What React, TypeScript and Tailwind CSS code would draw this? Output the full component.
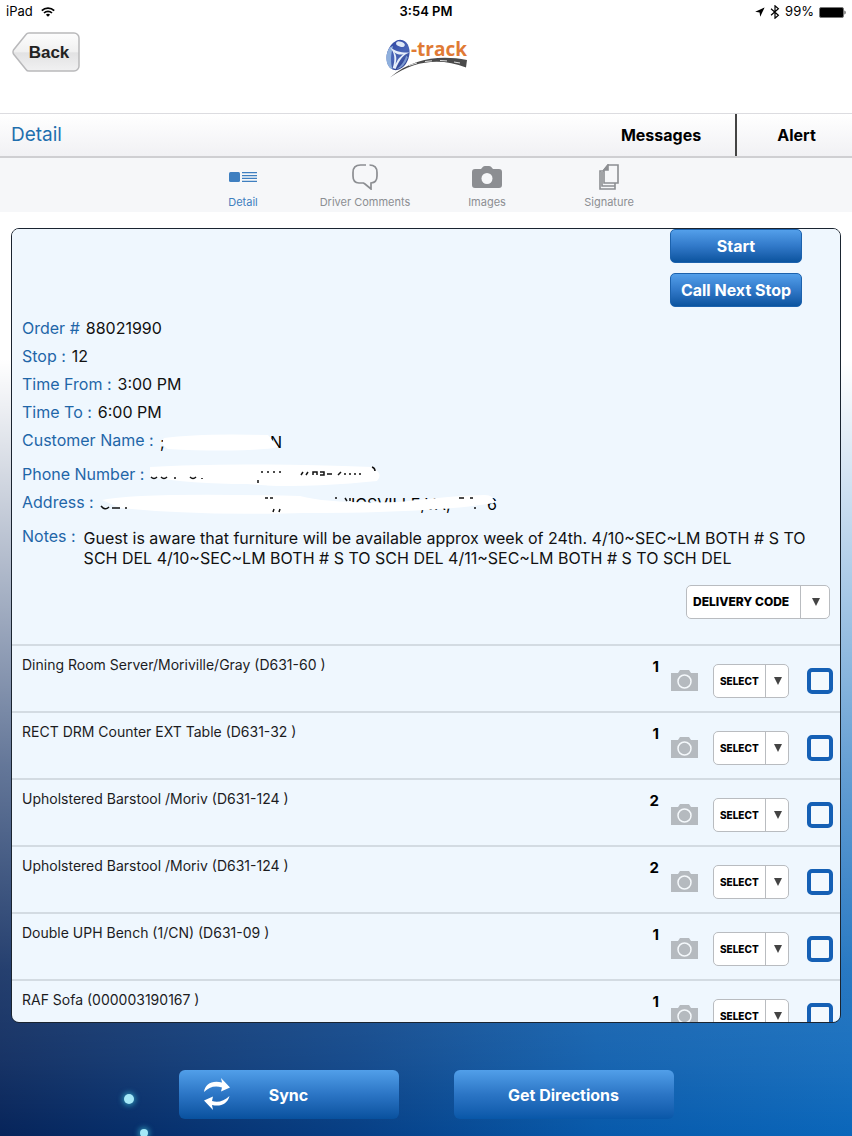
import type { ReactNode } from 'react';

const items = [
  { name: 'Dining Room Server/Moriville/Gray (D631-60 )', qty: 1 },
  { name: 'RECT DRM Counter EXT Table (D631-32 )', qty: 1 },
  { name: 'Upholstered Barstool /Moriv (D631-124 )', qty: 2 },
  { name: 'Upholstered Barstool /Moriv (D631-124 )', qty: 2 },
  { name: 'Double UPH Bench (1/CN) (D631-09 )', qty: 1 },
  { name: 'RAF Sofa (000003190167 )', qty: 1 },
];

function StatusBar() {
  return (
    <div className="grid h-6 shrink-0 grid-cols-3 items-center px-[6px] text-[13px] text-black">
      <div className="flex items-center gap-2">
        <span>iPad</span>
        <svg width="14" height="10" viewBox="0 0 14 10" fill="none" stroke="#000" strokeWidth="1.7">
          <path d="M0.8 3.6a8.8 8.8 0 0 1 12.4 0" />
          <path d="M3 6a5.7 5.7 0 0 1 8 0" />
          <path d="M7 9.8 4.9 7.7a3 3 0 0 1 4.2 0Z" fill="#000" stroke="none" />
        </svg>
      </div>
      <span className="text-center font-semibold">3:54 PM</span>
      <div className="flex items-center justify-end gap-[5px]">
        <svg width="10" height="10" viewBox="0 0 10 10">
          <path d="M9.6 0.4 0.2 4.8l4.4.6.6 4.4Z" />
        </svg>
        <svg width="10" height="14" viewBox="0 0 10 14" fill="none" stroke="#000" strokeWidth="1.2">
          <path d="m1 3.8 7.4 6.4L5 13.2V0.8l3.4 3L1 10.2" />
        </svg>
        <span>99%</span>
        <svg width="27" height="11" viewBox="0 0 27 11">
          <rect x="0.5" y="0.5" width="24" height="10" rx="1.5" fill="#000" stroke="#777" />
          <path d="M25.5 3.5c1.4.4 1.4 3.6 0 4Z" fill="#333" />
        </svg>
      </div>
    </div>
  );
}

function Logo() {
  return (
    <svg className="overflow-visible" width="84" height="42" viewBox="0 0 84 42" role="img" aria-label="i-track">
      <defs>
        <linearGradient id="oval" x1="0" y1="0" x2="1" y2="1">
          <stop offset="0" stopColor="#2b3f9e" />
          <stop offset="0.5" stopColor="#4a66b8" />
          <stop offset="1" stopColor="#23327f" />
        </linearGradient>
      </defs>
      <g transform="rotate(18 13 17)">
        <ellipse cx="13" cy="17" rx="11" ry="15.5" fill="url(#oval)" />
        <path d="M2 17c0 8 4 15 10.500 15.500C8 27 6 19 5.500 10Q2 12 2 17Z" fill="#8fb0dd" />
        <path d="M21 15c0 7-2 12-5 16q7-4 7-15Z" fill="#7a98d0" />
        <ellipse cx="12" cy="6" rx="4.500" ry="2.500" fill="#dfe8f7" />
        <path d="M3 12c6 2 14 2 20-1-5 4-7 9-8 20h-3c0-10-3-15-9-19Z" fill="#e6eefa" />
        <path d="M8.500 15.500c3 1 6.500 1 9.500-1-3 4-4 7-4.500 12C13 21 12 18 8.500 15.500Z" fill="#4560b0" />
      </g>
      <text x="26" y="18" fill="#e07a35" fontSize="19" fontWeight="700" fontFamily="Open Sans, sans-serif">
        -track
      </text>
      <path d="M5 39.500C28 20 55 17 82 22l-1 7.500C56 20 30 22 5 39.500Z" fill="#4a4a4a" />
      <path d="M24 27.500 32 25M40 23.500l7-.7M55 22.500l7 .4M69 24l6 1" stroke="#ddd" strokeWidth="1" />
    </svg>
  );
}

function BackButton() {
  return (
    <button
      type="button"
      className="relative flex h-10 w-[68px] items-center justify-center pt-px pl-[6px] font-['Liberation_Sans',sans-serif] text-[17px] font-bold text-[#222]"
    >
      <svg className="absolute inset-0" width="68" height="40" viewBox="0 0 68 40" aria-hidden="true">
        <defs>
          <linearGradient id="back" x1="0" y1="0" x2="0" y2="1">
            <stop offset="0" stopColor="#fdfdfd" />
            <stop offset="0.5" stopColor="#f0f0f0" />
            <stop offset="0.52" stopColor="#e2e2e3" />
            <stop offset="1" stopColor="#f1f1f2" />
          </linearGradient>
        </defs>
        <path
          d="M17 1h45a5 5 0 0 1 5 5v28a5 5 0 0 1-5 5H17q-2 0-3-1.500L1.500 22q-1-2 0-4L14 2.500Q15 1 17 1Z"
          fill="url(#back)"
          stroke="#b9b9bb"
          strokeWidth="1.500"
        />
      </svg>
      <span className="relative">Back</span>
    </button>
  );
}

function Tab({ label, active, children }: { label: string; active?: boolean; children: ReactNode }) {
  return (
    <button
      type="button"
      className={`flex w-[122px] flex-col items-center gap-[3px] text-[11px] leading-4 ${
        active ? 'text-[#3f7fc0]' : 'text-[#8c8e92]'
      }`}
    >
      <span className="flex h-7 items-center">{children}</span>
      {label}
    </button>
  );
}

function Tabs() {
  return (
    <nav className="flex h-[54px] shrink-0 justify-center bg-[#f6f7f9] pt-[5px]">
      <Tab label="Detail" active>
        <svg width="28" height="10" viewBox="0 0 28 10" fill="#3f7fc0">
          <rect width="11" height="10" rx="1.500" />
          <path d="M13 0h15v1.300H13zM13 2.900h15v1.300H13zM13 5.800h15v1.300H13zM13 8.700h15V10H13z" />
        </svg>
      </Tab>
      <Tab label="Driver Comments">
        <svg width="26" height="26" viewBox="0 0 26 26" fill="none" stroke="#8c8e92" strokeWidth="1.700">
          <path d="M14 1H8.500Q1 1 1 8.500V12q0 7 6 7h4.500l1.500 1 6 5v-6q6-.5 6-7V8.500Q25 1 17.500 1" />
        </svg>
      </Tab>
      <Tab label="Images">
        <svg width="30" height="22" viewBox="0 0 30 22">
          <path
            d="M3 3h6l2-2.200Q11.700 0 13 0h4q1.300 0 2 .8L21 3h6q3 0 3 3v13q0 3-3 3H3q-3 0-3-3V6q0-3 3-3Z"
            fill="#8c8e92"
          />
          <circle cx="15" cy="12.500" r="5.500" fill="#f6f7f9" />
        </svg>
      </Tab>
      <Tab label="Signature">
        <svg width="20" height="26" viewBox="0 0 20 26" fill="none" stroke="#8c8e92" strokeWidth="1.600">
          <path d="M9 1h10v18H5V6Z" />
          <path d="M9 1v5H5Z" fill="#8c8e92" />
          <path d="M5 7H1v18h15v-6M3 8v14h13" />
        </svg>
      </Tab>
    </nav>
  );
}

function Field({ label, children }: { label: string; children?: ReactNode }) {
  return (
    <div className="flex gap-[6px]">
      <dt className="text-[#1f66a8]">{label}</dt>
      <dd>{children}</dd>
    </div>
  );
}

function CodeSelect({ label, text, large }: { label: string; text: string; large?: boolean }) {
  return (
    <div className={`relative h-[34px] ${large ? 'w-36' : 'w-[76px]'}`}>
      <select
        aria-label={label}
        className={`h-full w-full appearance-none rounded-[5px] border border-[#b9bcc0] bg-white pl-[6px] font-extrabold text-black ${
          large ? 'text-[12px]' : 'text-[10px]'
        }`}
      >
        <option>{text}</option>
      </select>
      <span
        className={`pointer-events-none absolute inset-y-0 right-0 flex items-center justify-center border-l border-[#b9bcc0] ${
          large ? 'w-[30px]' : 'w-6'
        }`}
      >
        <svg width="8" height="8" viewBox="0 0 8 8" fill="#444">
          <path d="M0 0h8L4 8Z" />
        </svg>
      </span>
    </div>
  );
}

function PhotoIcon() {
  return (
    <svg width="27" height="21" viewBox="0 0 27 21">
      <path d="M0 3h7l2-3h9l2 3h7v18H0Z" fill="#b5babf" />
      <circle cx="13.500" cy="11.500" r="6.500" fill="none" stroke="#f4f8fb" strokeWidth="1.500" />
    </svg>
  );
}

function ItemTable() {
  return (
    <table className="w-full border-collapse">
      <tbody>
        {items.map((item, i) => (
          <tr key={i} className="h-[67px] border-t-2 border-[#d3dbe2] align-top">
            <td className="pt-[9px] pl-[10px] text-[14px] leading-5 text-[#1c1c1e]">{item.name}</td>
            <td className="w-10 pt-[11px] pr-3 text-right text-[15px] leading-5 font-bold">{item.qty}</td>
            <td className="w-[42px] pt-6">
              <button type="button" aria-label={`Photo of ${item.name}`} className="block">
                <PhotoIcon />
              </button>
            </td>
            <td className="w-[94px] pt-[18px]">
              <CodeSelect label={`Code for ${item.name}`} text="SELECT" />
            </td>
            <td className="w-[33px] pt-[22px]">
              <input
                type="checkbox"
                aria-label={`Check ${item.name}`}
                className="block size-[26px] appearance-none rounded-[5px] border-4 border-[#1560b5] bg-[#f3f9fe]"
              />
            </td>
          </tr>
        ))}
      </tbody>
    </table>
  );
}

function ActionButton({ children }: { children: ReactNode }) {
  return (
    <button
      type="button"
      className="h-[34px] w-[132px] rounded-[5px] border border-[#1c62ad] bg-linear-to-b from-[#539fea] via-[#3179c9] to-[#0a549f] text-[16px] font-bold text-white"
    >
      {children}
    </button>
  );
}

function OrderCard() {
  return (
    <section className="min-h-0 flex-1 overflow-x-hidden overflow-y-auto rounded-lg border border-[#1a2430] bg-[#eff7fe] [scrollbar-width:none]">
      <div className="flex flex-col items-end gap-[10px] pr-[38px]">
        <ActionButton>Start</ActionButton>
        <ActionButton>Call Next Stop</ActionButton>
      </div>

      <dl className="mt-[7px] pl-[10px] text-[16px] leading-7 text-[#111]">
        <Field label="Order #">88021990</Field>
        <Field label="Stop :">12</Field>
        <Field label="Time From :">3:00 PM</Field>
        <Field label="Time To :">6:00 PM</Field>
        <Field label="Customer Name :">
          <svg width="124" height="28" viewBox="0 0 124 28" className="block">
            <text x="0" y="22" fontSize="16">;</text>
            <text x="110" y="22" fontSize="16">N</text>
            <path d="M4 12Q40 7 108 9l10 12q-6 2-14 2-40 3-96 0-8-5-4-11Z" fill="#fff" />
          </svg>
        </Field>
        <div className="h-[6px]" />
        <Field label="Phone Number :">
          <svg width="240" height="28" viewBox="0 0 240 28" className="block">
            <path d="M0 7Q80 2 222 7q12 7 5 14-80 8-130 3Q40 24 0 17Z" fill="#fff" />
            <path
              d="M1 17q3 3 6 0M11 17q3 3 6 0M25 17v2M40 17q3 3 6 0M52 18v1M108 20v3M111 12h2m4 0h2m4 0h2m4 0h2M151 15l2-3m3 3 2-3m5 3v-3h4v3m3-3h4v3h-4m7-1h5M188 15l3-3m4 3v-2m5 2v-2m5 2v-2m5 2v-2M222 7q3 1 3 4"
              fill="none"
              stroke="#111"
              strokeWidth="1.500"
            />
          </svg>
        </Field>
        <Field label="Address :">
          <svg width="406" height="28" viewBox="0 0 406 28" className="block">
            <text x="251" y="22" fontSize="16">ICSVILLE,VA,</text>
            <text x="387" y="22" fontSize="16">6</text>
            <path d="M2 12Q40 4 200 8q30 8 100 6 60-7 85-7 9 0 9 8-60 10-190 10Q100 28 20 20Z" fill="#fff" />
            <path
              d="M1 18q4 5 8 1M12 20h8M25 20h2M165 10h3m2 0h3M174 21l-1 3m7-3-1 3M235 10h2m8 0 2 3m3-3v3M359 10h5m6 0h3M375 19v2"
              fill="none"
              stroke="#111"
              strokeWidth="1.500"
            />
          </svg>
        </Field>
        <div className="mt-[6px] flex gap-2">
          <dt className="shrink-0 text-[#1f66a8]">Notes :</dt>
          <dd className="pt-[6px] pr-[30px] leading-5">
            Guest is aware that furniture will be available approx week of 24th. 4/10~SEC~LM BOTH # S TO SCH DEL
            4/10~SEC~LM BOTH # S TO SCH DEL 4/11~SEC~LM BOTH # S TO SCH DEL
          </dd>
        </div>
      </dl>

      <div className="mt-[17px] mb-[25px] flex justify-end pr-[10px]">
        <CodeSelect label="Delivery code" text="DELIVERY CODE" large />
      </div>

      <ItemTable />
    </section>
  );
}

function BottomBar() {
  return (
    <footer className="relative flex shrink-0 justify-center gap-[55px] pt-[47px] pb-[17px]">
      <span className="absolute top-[71px] left-[124px] size-[10px] rounded-full bg-[#a5e8f7] shadow-[0_0_5px_2px_#267fa6]" />
      <span className="absolute top-[106px] left-[140px] size-2 rounded-full bg-[#a5e8f7] shadow-[0_0_5px_2px_#267fa6]" />
      <button
        type="button"
        className="relative h-[49px] w-[220px] rounded-md bg-linear-to-b from-[#519fe9] via-[#2b75c5] to-[#08519e] text-[16px] font-bold text-white"
      >
        <svg className="absolute top-2 left-6" width="28" height="32" viewBox="0 0 28 32" fill="#fff">
          <path d="M1 14C2 6 9 2 19 4.500L18 0l9 9.500-9 4 1-4C12 7 6 9 1 14Z" />
          <path d="M26.500 18c-2 8-9 11-17.500 9l1 5-9-9.500 9-4-1 4.500c6 2 12 0 17.500-5Z" />
        </svg>
        Sync
      </button>
      <button
        type="button"
        className="h-[49px] w-[220px] rounded-md bg-linear-to-b from-[#519fe9] via-[#2b75c5] to-[#0857a8] text-[16px] font-bold text-white"
      >
        Get Directions
      </button>
    </footer>
  );
}

export default function App() {
  return (
    <div className="flex h-screen flex-col bg-white font-[Inter,sans-serif]">
      <StatusBar />
      <header className="grid h-[89px] shrink-0 grid-cols-3 items-start px-3 pt-2">
        <BackButton />
        <div className="flex justify-center pt-[6px] pl-px">
          <Logo />
        </div>
      </header>

      <div className="flex h-[45px] shrink-0 items-stretch border-t border-b-2 border-t-[#dcdce0] border-b-[#cfcfd2] bg-linear-to-b from-white to-[#f1f1f4]">
        <h1 className="flex flex-1 items-center pt-px pl-[11px] text-[19px] text-[#1f6fae]">Detail</h1>
        <button type="button" className="w-[150px] border-r-2 border-[#444] text-[16px] font-bold">
          Messages
        </button>
        <button type="button" className="w-[115px] pl-1 text-[16px] font-bold">
          Alert
        </button>
      </div>

      <Tabs />

      <main className="flex min-h-0 flex-1 flex-col bg-[linear-gradient(90deg,#06245a_0%,#063f85_42%,#0759aa_70%,#0a66ba_100%)]">
        <div className="flex min-h-0 flex-1 flex-col bg-[linear-gradient(180deg,#fff_0%,#fff_16%,#ffffffb0_38%,#ffffff60_60%,#ffffff20_82%,#ffffff12_92%,transparent_100%)]">
          <div className="flex min-h-0 flex-1 flex-col px-[11px] pt-4">
            <OrderCard />
          </div>
          <BottomBar />
        </div>
      </main>
    </div>
  );
}
